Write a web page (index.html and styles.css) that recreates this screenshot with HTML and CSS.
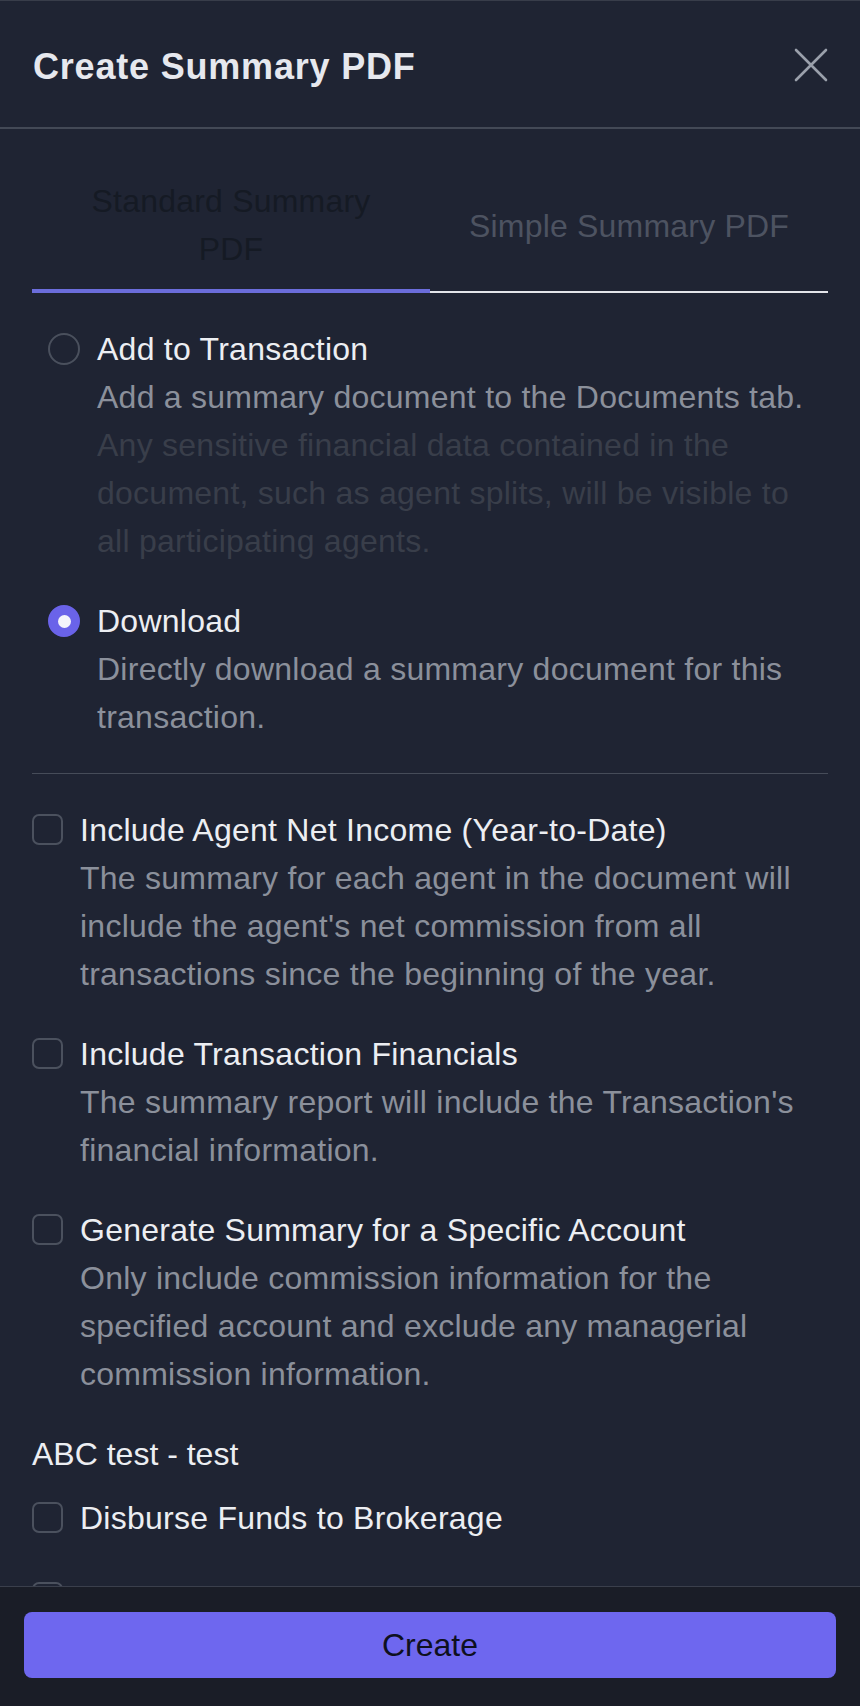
FILE: index.html
```html
<!DOCTYPE html>
<html lang="en">
<head>
  <meta charset="UTF-8">
  <meta name="viewport" content="width=device-width, initial-scale=1.0">
  <title>Create Summary PDF</title>
  <link rel="stylesheet" href="styles.css">
</head>
<body>

  <div class="modal">

    <div class="modal-header">
      <h1 class="modal-title">Create Summary PDF</h1>
      <button class="close-btn" aria-label="Close">
        <svg width="34" height="34" viewBox="0 0 34 34">
          <path d="M2 2 L32 32 M32 2 L2 32" stroke="currentColor" stroke-width="2.6" stroke-linecap="round" fill="none"/>
        </svg>
      </button>
    </div>

    <div class="modal-body">

      <div class="tabs">
        <button class="tab active"><span class="tab-text">Standard Summary PDF</span></button>
        <button class="tab"><span class="tab-text">Simple Summary PDF</span></button>
      </div>

      <div class="radio-group">
        <label class="option">
          <input type="radio" name="mode" class="radio">
          <div class="option-text">
            <div class="option-label">Add to Transaction</div>
            <div class="option-desc">Add a summary document to the Documents tab.</div>
            <div class="option-desc faint">Any sensitive financial data contained in the document, such as agent splits, will be visible to all participating agents.</div>
          </div>
        </label>

        <label class="option">
          <input type="radio" name="mode" class="radio" checked>
          <div class="option-text">
            <div class="option-label">Download</div>
            <div class="option-desc">Directly download a summary document for this transaction.</div>
          </div>
        </label>
      </div>

      <hr class="divider">

      <div class="check-group">
        <label class="option">
          <input type="checkbox" class="checkbox">
          <div class="option-text">
            <div class="option-label">Include Agent Net Income (Year-to-Date)</div>
            <div class="option-desc">The summary for each agent in the document will include the agent's net commission from all transactions since the beginning of the year.</div>
          </div>
        </label>

        <label class="option">
          <input type="checkbox" class="checkbox">
          <div class="option-text">
            <div class="option-label">Include Transaction Financials</div>
            <div class="option-desc">The summary report will include the Transaction's financial information.</div>
          </div>
        </label>

        <label class="option">
          <input type="checkbox" class="checkbox">
          <div class="option-text">
            <div class="option-label">Generate Summary for a Specific Account</div>
            <div class="option-desc">Only include commission information for the specified account and exclude any managerial commission information.</div>
          </div>
        </label>

        <div class="account-group">
          <div class="account-name">ABC test - test</div>
          <div class="account-options">
            <label class="option">
              <input type="checkbox" class="checkbox">
              <div class="option-text">
                <div class="option-label">Disburse Funds to Brokerage</div>
              </div>
            </label>
            <label class="option">
              <input type="checkbox" class="checkbox">
              <div class="option-text">
                <div class="option-label">Brokerage Summary Fields</div>
              </div>
            </label>
          </div>
        </div>
      </div>

    </div>

    <div class="modal-footer">
      <button class="create-btn">Create</button>
    </div>

  </div>

</body>
</html>
```

FILE: styles.css
```css
* {
  box-sizing: border-box;
}

body {
  margin: 0;
  background-color: #1f2433;
  font-family: "Liberation Sans", Arial, sans-serif;
  color: #eceef2;
}

.modal {
  height: 100vh;
  display: flex;
  flex-direction: column;
  border-top: 1px solid #383d4a;
}

/* header */

.modal-header {
  height: 128px;
  flex-shrink: 0;
  display: flex;
  align-items: center;
  justify-content: space-between;
  padding: 2px 32px 0 33px;
  border-bottom: 2px solid #434956;
}

.modal-title {
  margin: 0;
  padding-top: 4px;
  font-size: 36px;
  font-weight: 600;
  letter-spacing: 0.8px;
  color: #e6e8ee;
}

.close-btn {
  background: none;
  border: none;
  padding: 0;
  color: #9aa0ab;
  cursor: pointer;
  display: flex;
}

/* body */

.modal-body {
  flex: 1;
  overflow: hidden;
  padding: 32px 32px 0 32px;
}

.tabs {
  display: flex;
}

.tab {
  flex: 1;
  background: none;
  border: none;
  border-bottom: 2px solid #e3e5ea;
  padding: 16px 32px;
  font-family: inherit;
  font-size: 32px;
  line-height: 48px;
  letter-spacing: 0.2px;
  color: #4d5361;
  cursor: pointer;
}

.tab.active {
  border-bottom: 4px solid #6b6ddb;
  color: #151a24;
}

.option {
  display: flex;
  align-items: flex-start;
  gap: 17px;
  cursor: pointer;
}

.option-text {
  flex: 1;
  font-size: 32px;
  line-height: 48px;
  letter-spacing: 0.25px;
}

.option-label {
  color: #eceef2;
}

.option-desc {
  color: #8b909b;
}

.option-desc.faint {
  color: #393e4a;
}

.radio-group {
  display: flex;
  flex-direction: column;
  gap: 32px;
  padding: 32px 16px 0 16px;
}

.radio {
  appearance: none;
  margin: 8px 0 0 0;
  width: 32px;
  height: 32px;
  border: 2px solid #4a505d;
  border-radius: 50%;
  flex-shrink: 0;
  display: flex;
  align-items: center;
  justify-content: center;
}

.radio:checked {
  background-color: #6a63e9;
  border-color: #6a63e9;
}

.radio:checked::after {
  content: "";
  width: 13px;
  height: 13px;
  border-radius: 50%;
  background-color: #f4f4fb;
}

.divider {
  margin: 32px 0;
  border: none;
  border-top: 1px solid #464c59;
}

.check-group {
  display: flex;
  flex-direction: column;
  gap: 32px;
}

.checkbox {
  appearance: none;
  margin: 8px 0 0 0;
  width: 31px;
  height: 31px;
  border: 2px solid #4b515e;
  border-radius: 7px;
  flex-shrink: 0;
}

.account-name {
  font-size: 32px;
  line-height: 48px;
  color: #eceef2;
  margin-bottom: 16px;
}

.account-options {
  display: flex;
  flex-direction: column;
  gap: 32px;
}

/* footer */

.modal-footer {
  flex-shrink: 0;
  background-color: #1a1d27;
  border-top: 1px solid #3a3f4c;
  padding: 25px 24px 28px 24px;
}

.create-btn {
  width: 100%;
  height: 66px;
  border: none;
  border-radius: 8px;
  background-color: #6e67ef;
  color: #0e1020;
  font-family: inherit;
  font-size: 32px;
  cursor: pointer;
}
```
